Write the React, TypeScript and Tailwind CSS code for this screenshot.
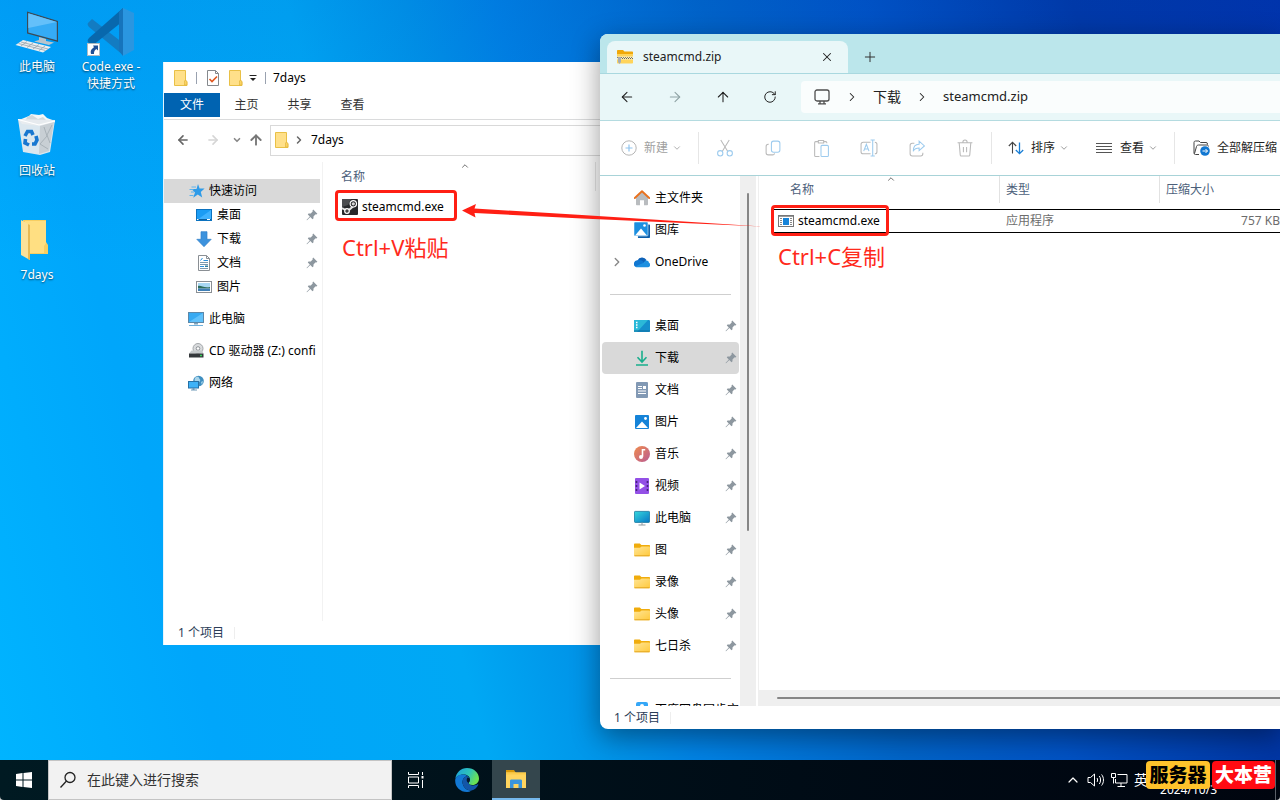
import React from 'react';
import {
  ArrowLeft, ArrowRight, ArrowUp, ChevronDown, ChevronRight, ChevronUp, Plus, RotateCw, X,
} from 'lucide-react';

type IconProps = { className?: string };

// ---------- shared icons ----------

const PinIcon = ({ className = '' }: IconProps) => (
  <svg viewBox="0 0 12 12" className={`h-3 w-3 shrink-0 ${className}`} fill="#8d979f">
    <path d="M7.2.6 11.4 4.8 10.4 5.5 9.7 5.2 7.6 7.3 7.4 9.6 6.5 10.2 4.3 8 1 11.3.5 10.9 3.8 7.4 1.8 5.4 2.5 4.6 4.8 4.4 6.8 2.3 6.5 1.5Z" />
  </svg>
);

// narrow manila folder used by the older shell
const ManilaFolder = ({ className = '' }: IconProps) => (
  <svg viewBox="0 0 14 16" className={`shrink-0 ${className}`}>
    <path d="M.5.5h11v10l1.5 1.2v3.8H.5Z" fill="#ffe08a" stroke="#e9c046" />
    <path d="M10.500 15V10.800l1.500-.5.800 1.200V15Z" fill="#fbd362" stroke="#dfb238" strokeWidth=".6" />
  </svg>
);

const YellowFolder = () => (
  <svg viewBox="0 0 16 16" className="h-4 w-4 shrink-0">
    <defs>
      <linearGradient id="fold" x1="0" y1="0" x2="1" y2="1">
        <stop stopColor="#ffe596" />
        <stop offset="1" stopColor="#ffc93c" />
      </linearGradient>
    </defs>
    <path d="M0 2.500C0 1.900.4 1.500 1 1.500h4.800l1.600 1.600H15c.6 0 1 .4 1 1V8H0Z" fill="#f0ac0c" />
    <path d="M0 5.800h6l1.600-1.400H15c.6 0 1 .4 1 1v7.800c0 .6-.4 1-1 1H1c-.6 0-1-.4-1-1Z" fill="url(#fold)" />
    <path d="M.5 13.800h15" stroke="#e0a21a" strokeWidth=".9" />
  </svg>
);

const MonitorIcon = () => (
  <svg viewBox="0 0 16 16" className="h-4 w-4 shrink-0">
    <defs>
      <linearGradient id="mon" x1="0" y1="0" x2="1" y2="1">
        <stop stopColor="#35d8dc" />
        <stop offset="1" stopColor="#0876c6" />
      </linearGradient>
    </defs>
    <rect x=".4" y="1.400" width="15.200" height="11" rx=".8" fill="url(#mon)" stroke="#14759d" strokeWidth=".8" />
    <path d="M7.500 12.500h1v2.200h-1ZM4.500 14.600h7v1h-7Z" fill="#909aa0" />
  </svg>
);

// ---------- desktop icons ----------

const ComputerIcon = () => (
  <svg viewBox="0 0 48 48" className="h-12 w-12">
    <path d="m14 3.500 31 9.500v21L14 25.500Z" fill="#3c4a56" />
    <path d="m15.300 5.300 28.500 8.600v18.400l-28.500-7.800Z" fill="#35abf5" />
    <path d="m15.300 5.300 28.500 8.600L15.300 20Z" fill="#64c0fa" />
    <path d="m26 29 7 2 0 2 8 1.500-5 2.500-15-3.500 5-1.500Z" fill="#b8c4cb" />
    <path d="m10 32 28 7-8 5.500L2.500 37Z" fill="#e9eef1" />
    <path d="m8 34 27 7M5.500 35.500l27 7M14 33.500l-6 4.500M20 35l-6 4.500M26 36.500 20 41M32 38l-6 4.500" stroke="#96a3ab" strokeWidth=".8" />
  </svg>
);

const RecycleBinIcon = () => (
  <svg viewBox="0 0 48 48" className="h-12 w-12">
    <path d="m6 8 5-2 5-2 2-2 8 1 4-1 4 4 8 3-3 6-30-3Z" fill="#f5f7f8" />
    <path d="m14 5 5-2 6 4 5-2 4 4-9 3-13-2Z" fill="#d3d9dd" />
    <path d="m5 7 37 1-5 32-10 3-17-3Z" fill="#e7ebee" opacity=".95" />
    <path d="m27 14 14-4-5 29-10 3Z" fill="#c8cfd4" />
    <path d="m31 15 3 9-7 8 8 5M39 13l-5 10 3 8" fill="none" stroke="#a9b2b8" />
    <path d="m5 7.500 21 5.500 16-4" fill="none" stroke="#fff" strokeWidth="1.200" />
    <g fill="none" stroke="#1877d0" strokeWidth="3.600">
      <path d="m12 24 2.500-4.500h4L20 23" />
      <path d="m23 24 1 4-2 4h-3" />
      <path d="m16 33-4-2 .5-4" />
    </g>
  </svg>
);

const BigFolderIcon = () => (
  <svg viewBox="0 0 48 48" className="h-12 w-12">
    <path d="M10 4h23v22l2 3v9H10Z" fill="#f7ce62" />
    <path d="M12 5h21v22l-2 3v7H12Z" fill="#ffdf82" />
    <path d="m8 4 9 5v35l-9-5Z" fill="#fbe199" />
    <path d="m15 8 2 1v35l-2-1Z" fill="#e8ba54" />
  </svg>
);

const CodeIcon = () => (
  <svg viewBox="0 0 48 48" className="h-12 w-12">
    <path d="m1 15 4-4 31 24v12L2 19c-1-1-2-3-1-4Z" fill="#137cc2" />
    <path d="m1 34 4 4 31-25V0L2 30c-1 1-2 3-1 4Z" fill="#0868ad" />
    <path d="m36 0 11 5v37l-11 6Z" fill="#2a96e0" />
    <path d="m36 0-4 4v39l4 5Z" fill="#1674bc" />
    <rect x=".5" y="35.500" width="12" height="12" fill="#fff" stroke="#aebbc4" />
    <path d="M6 37.500h5v5L9.300 41C7 43 7 44 7 46H4c-1-4 1-5 3-6.700Z" fill="#1f4f96" />
  </svg>
);

const desktopIcons = [
  { label: '此电脑', icon: <ComputerIcon />, place: 'left-0 top-2' },
  { label: '回收站', icon: <RecycleBinIcon />, place: 'left-0 top-28' },
  { label: '7days', icon: <BigFolderIcon />, place: 'left-0 top-54' },
  { label: 'Code.exe - 快捷方式', icon: <CodeIcon />, place: 'left-[74px] top-2' },
];

// ---------- older explorer window ----------

const QuickAccessIcon = () => (
  <svg viewBox="0 0 16 16" className="h-4 w-4 shrink-0">
    <path d="m9 1 1.600 4.500h5L11.800 9l1.400 5.500L8.800 11.600 4.200 14.800 6 9.500 2.500 6h5Z" fill="#2e9be8" />
    <path d="M2.500 4h4.500M.5 6.500h4M2 9h3M.5 12.500h4" stroke="#5eb3ec" />
  </svg>
);

const OldDesktopIcon = () => (
  <svg viewBox="0 0 16 16" className="h-4 w-4 shrink-0">
    <rect x=".5" y="2.500" width="15" height="11" fill="#1b9cf4" stroke="#0b72bf" />
    <path d="m1 13 14-10v10Z" fill="#3fb2ff" />
    <path d="M1 12.500h14" stroke="#0b5f9f" />
    <path d="M1 12.500h1.500M11 12.500h3" stroke="#fff" />
  </svg>
);

const OldDownloadIcon = () => (
  <svg viewBox="0 0 16 16" className="h-4 w-4 shrink-0">
    <path d="M5 .7h6v7.600h4.200L8 15.700.8 8.300H5Z" fill="#3c92dd" stroke="#2f7fca" strokeWidth=".7" />
  </svg>
);

const OldDocIcon = () => (
  <svg viewBox="0 0 16 16" className="h-4 w-4 shrink-0">
    <path d="M2.500.5h8l3 3v12h-11Z" fill="#fff" stroke="#8a8f94" />
    <path d="M10.500.5v3h3" fill="none" stroke="#8a8f94" />
    <path d="M4 7.500h8M4 9.500h8M4 13.500h8" stroke="#7c98ad" />
    <path d="M4.500 5.500 6.500 3M7.500 5.500H12M4 11.500h4" stroke="#2990dd" />
    <path d="M9 10.500h3v1.500H9Z" fill="#2f7c9d" />
  </svg>
);

const OldPictureIcon = () => (
  <svg viewBox="0 0 16 16" className="h-4 w-4 shrink-0">
    <rect x=".5" y="2.500" width="15" height="11" fill="#fff" stroke="#8a8f94" />
    <path d="M2 4h12v4H2Z" fill="#a8d7f3" />
    <path d="M2 7c3-1 5 2 12 1v1.500H2Z" fill="#2d6d5b" />
    <path d="M2 9.500h12V12H2Z" fill="#3f7fb6" />
  </svg>
);

const OldPcIcon = () => (
  <svg viewBox="0 0 16 16" className="h-4 w-4 shrink-0">
    <rect x=".5" y="1.500" width="15" height="10" fill="#37aaf2" stroke="#5d88a8" />
    <path d="m1 11 14-9v9Z" fill="#60c1fa" />
    <path d="M6 12h4v1.500H6Z" fill="#7fa3bb" />
    <path d="M1 14.500h14" stroke="#6fb0dc" />
  </svg>
);

const CdIcon = () => (
  <svg viewBox="0 0 16 16" className="h-4 w-4 shrink-0">
    <circle cx="10" cy="5.500" r="5" fill="#d9dbdd" stroke="#a3a7aa" />
    <circle cx="10" cy="5.500" r="1.800" fill="#fff" stroke="#8d9296" />
    <path d="m3.500 7.500-2.500 3h14.500l-1.500-3Z" fill="#c6cacc" />
    <path d="M1 10.500h14.500v4H1Z" fill="#34383b" />
    <path d="M12 12.500h2" stroke="#37d45a" strokeWidth="1.500" />
  </svg>
);

const NetworkIcon = () => (
  <svg viewBox="0 0 16 16" className="h-4 w-4 shrink-0">
    <circle cx="10.500" cy="6" r="5.300" fill="#3f8fc0" />
    <path d="M7 3c2-2 4-1 4 0s2 1 1 3-3 0-4 1-2-2-1-4ZM13 7l2-1-1 4Z" fill="#a8d4ea" />
    <rect x=".5" y="6.500" width="10" height="6.500" fill="#3eb2f7" stroke="#2671a6" />
    <path d="M4.500 13h2v1.500h-2ZM3 14.500h6v1H3Z" fill="#6f9ab8" />
  </svg>
);

const SteamIcon = () => (
  <svg viewBox="0 0 16 16" className="h-4 w-4 shrink-0">
    <rect width="16" height="16" rx="1" fill="#26282b" />
    <path d="M0 0h9L6 6 0 8Z" fill="#4a4c4f" />
    <path d="m0 9 4.500 2.500M7 11l4.500-4" fill="none" stroke="#e2e2e2" strokeWidth="2" />
    <circle cx="11.300" cy="4.800" r="3.200" fill="#26282b" stroke="#fff" strokeWidth="1.200" />
    <circle cx="11.300" cy="4.800" r="1.600" fill="#d5d5d5" />
    <circle cx="5" cy="12" r="2.300" fill="#444" stroke="#fff" strokeWidth="1.200" />
  </svg>
);

const oldNav = [
  { label: '桌面', icon: <OldDesktopIcon /> },
  { label: '下载', icon: <OldDownloadIcon /> },
  { label: '文档', icon: <OldDocIcon /> },
  { label: '图片', icon: <OldPictureIcon /> },
];

const oldRoots = [
  { label: '此电脑', icon: <OldPcIcon /> },
  { label: 'CD 驱动器 (Z:) confi', icon: <CdIcon /> },
  { label: '网络', icon: <NetworkIcon /> },
];

function DaysWindow() {
  return (
    <section aria-label="7days" className="absolute bottom-[115px] left-[163px] top-[62px] flex w-[560px] flex-col border-l border-[#e4f4fd] bg-white">
      <header className="flex h-[31px] shrink-0 items-center pl-2.5">
        <ManilaFolder className="h-4 w-3.5" />
        <span className="ml-2 h-3 w-px bg-gray-400" />
        <svg viewBox="0 0 12 16" className="ml-2.5 h-4 w-3">
          <path d="M.5.5h8l3 3v12H.5Z" fill="#fff" stroke="#85898d" />
          <path d="M8.500.5v3h3" fill="none" stroke="#85898d" />
          <path d="m2.500 9 2.500 2.500 5-5" fill="none" stroke="#e1571f" strokeWidth="1.600" />
        </svg>
        <ManilaFolder className="ml-2.5 h-4 w-3.5" />
        <svg viewBox="0 0 8 8" className="ml-1.5 h-2 w-2">
          <path d="M.5 1.500h7" stroke="#222" />
          <path d="M1 4h6L4 7Z" fill="#222" />
        </svg>
        <span className="ml-2 h-3 w-px bg-gray-400" />
        <h2 className="ml-[7px]">7days</h2>
      </header>

      <div className="flex h-[27px] shrink-0 items-start border-b border-[#dadbdc] text-[#333]">
        <button className="h-6 w-14 bg-[#0063b1] text-white">文件</button>
        <button className="h-6 w-[53px]">主页</button>
        <button className="h-6 w-[53px]">共享</button>
        <button className="h-6 w-[53px]">查看</button>
      </div>

      <div className="flex h-10 shrink-0 items-center pl-3">
        <button aria-label="返回"><ArrowLeft className="h-3.5 w-3.5 text-[#666]" strokeWidth={2.8} /></button>
        <button aria-label="前进" className="ml-4"><ArrowRight className="h-3.5 w-3.5 text-[#d5d5d5]" strokeWidth={2.8} /></button>
        <button aria-label="最近" className="ml-3"><ChevronDown className="h-2.5 w-2.5 text-[#888]" strokeWidth={4} /></button>
        <button aria-label="向上" className="ml-1.5"><ArrowUp className="h-4 w-4 text-[#777]" strokeWidth={2.8} /></button>
        <div className="ml-1.5 flex h-[31px] flex-1 items-center border border-[#d9d9d9] pl-1">
          <ManilaFolder className="h-4 w-3.5" />
          <ChevronRight className="ml-1 h-3 w-3 text-[#666]" strokeWidth={3} />
          <span className="ml-1.5">7days</span>
        </div>
      </div>

      <div className="flex min-h-0 flex-1">
        <nav className="mt-0.5 w-[159px] shrink-0 border-r border-[#f2f2f2] pt-[17px]">
          <a href="#quick" className="flex h-6 w-[156px] items-center gap-1 bg-[#d9d9d9] pl-[25px]">
            <QuickAccessIcon />快速访问
          </a>
          {oldNav.map((item) => (
            <a key={item.label} href="#nav" className="flex h-6 w-[156px] items-center pl-8">
              {item.icon}
              <span className="ml-[5px] flex-1">{item.label}</span>
              <PinIcon className="mr-0.5" />
            </a>
          ))}
          <div className="mt-2 flex flex-col gap-2">
            {oldRoots.map((item) => (
              <a key={item.label} href="#root" className="flex h-6 items-center gap-[5px] whitespace-nowrap pl-6">
                {item.icon}
                {item.label}
              </a>
            ))}
          </div>
        </nav>

        <div className="relative flex-1">
          <ChevronUp className="absolute left-[137px] top-px h-2.5 w-2.5 text-[#555]" strokeWidth={2} />
          <table className="w-full table-fixed border-collapse text-left">
            <thead>
              <tr>
                <th className="w-[273px] p-0 font-normal text-[#4c607a]">
                  <div className="mt-0.5 flex h-[29px] items-center border-r border-[#e5e5e5] pl-4.5">名称</div>
                </th>
                <th />
              </tr>
            </thead>
            <tbody>
              <tr>
                <td className="p-0">
                  <div className="mt-1 flex h-6 items-center gap-1 pl-[19px]"><SteamIcon />steamcmd.exe</div>
                </td>
                <td />
              </tr>
            </tbody>
          </table>
          <div className="absolute left-3 top-[30px] h-[31px] w-[122px] rounded border-3 border-[#ff1f14]" />
          <p className="absolute left-[19px] top-[71px] whitespace-nowrap text-[22px] leading-8 text-[#ff2a1c]">Ctrl+V粘贴</p>
        </div>
      </div>

      <footer className="flex h-6 shrink-0 items-center pl-3.5 text-[#2b3d57]">
        1 个项目
        <span className="ml-2.5 h-3 w-px bg-[#eee]" />
      </footer>
    </section>
  );
}

// ---------- newer explorer window ----------

const ZipIcon = () => (
  <svg viewBox="0 0 16 16" className="h-4 w-4 shrink-0">
    <path d="M0 2c0-.6.4-1 1-1h5l1.500 1.500H15c.6 0 1 .4 1 1V7H0Z" fill="#f0a80a" />
    <path d="M0 5h16v8.500c0 .6-.4 1-1 1H1c-.6 0-1-.4-1-1Z" fill="#ffd45a" />
    <path d="M0 7.500h16v3H0Z" fill="#f6ecc6" />
    <path d="M0 8.500h16" stroke="#8a8266" strokeDasharray="1 1" />
    <path d="M1 9.500h15" stroke="#6e6850" strokeDasharray="1 1" />
    <path d="M1 8h3v5l-1.500 2L1 13Z" fill="#a8adb1" />
  </svg>
);

const HomeIcon = () => (
  <svg viewBox="0 0 16 16" className="h-4 w-4 shrink-0">
    <path d="M2 7 8 2l6 5v7.500c0 .5-.3.800-.8.800H10v-5H6v5H2.800c-.5 0-.8-.3-.8-.8Z" fill="#b9bcbf" />
    <path d="M.8 8 8 1.300 15.200 8" fill="none" stroke="#e8711e" strokeWidth="1.900" strokeLinecap="round" strokeLinejoin="round" />
  </svg>
);

const GalleryIcon = () => (
  <svg viewBox="0 0 16 16" className="h-4 w-4 shrink-0">
    <path d="M3 2.500h12c.6 0 1 .4 1 1V15c0 .6-.4 1-1 1H4Z" fill="#0c5fab" />
    <rect width="14" height="14" rx="1" fill="#1c8fe0" stroke="#fff" strokeWidth=".5" />
    <path d="m1 13.500 6-7 6 7Z" fill="#fff" />
    <circle cx="10.500" cy="3.500" r="1.300" fill="#fff" />
  </svg>
);

const CloudIcon = () => (
  <svg viewBox="0 0 16 16" className="h-4 w-4 shrink-0">
    <path d="M3.500 6.500a5 5 0 0 1 9-.5L9 10 3 12Z" fill="#0e62b8" />
    <path d="M3.800 6.300A3.500 3.500 0 0 0 2 13l8-4.500C8 6.500 6 5.700 3.800 6.300Z" fill="#1177d1" />
    <path d="M10 8.500c1-3 4.500-2.500 5 .2A2.500 2.500 0 0 1 13.500 13.300H3c-1 0-1.500-.5-1.800-.8Z" fill="#1e90e0" />
  </svg>
);

const DesktopIcon = () => (
  <svg viewBox="0 0 16 16" className="h-4 w-4 shrink-0">
    <rect y="2" width="16" height="12" rx="1" fill="#1590cc" />
    <path d="M1 2h13L3 14H1c-.6 0-1-.4-1-1V3c0-.6.4-1 1-1Z" fill="#2bb9d8" />
    <path d="M2 4.500h1.500M2 7h1.500M2 9.500h1.500" stroke="#fff" strokeWidth="1.400" />
    <path d="M0 13h16" stroke="#116f9f" />
  </svg>
);

const DownloadIcon = () => (
  <svg viewBox="0 0 16 16" className="h-4 w-4 shrink-0" fill="none" stroke="#18ae8c" strokeWidth="1.600">
    <path d="M8 .8v11M3.500 7.300 8 12l4.500-4.700M2 15h12" />
  </svg>
);

const DocIcon = () => (
  <svg viewBox="0 0 16 16" className="h-4 w-4 shrink-0">
    <rect x="2" width="12" height="16" rx="1" fill="#8299b4" />
    <path d="M4 4.500h4M4 6.500h4M4 9h8M4 11.500h8" stroke="#fff" strokeWidth="1.200" />
    <rect x="9" y="4" width="3" height="3" fill="#fff" />
  </svg>
);

const PictureIcon = () => (
  <svg viewBox="0 0 16 16" className="h-4 w-4 shrink-0">
    <rect x="1" y="1" width="14" height="14" rx="1" fill="#1583d8" />
    <path d="m2 14 6-6.500 6 6.500Z" fill="#fff" />
    <circle cx="11.500" cy="4.500" r="1.400" fill="#fff" />
  </svg>
);

const MusicIcon = () => (
  <svg viewBox="0 0 16 16" className="h-4 w-4 shrink-0">
    <defs>
      <linearGradient id="mus" x1="0" y1="0" x2="1" y2="1">
        <stop stopColor="#f08c4c" />
        <stop offset="1" stopColor="#b95b94" />
      </linearGradient>
    </defs>
    <circle cx="8" cy="8" r="8" fill="url(#mus)" />
    <path d="M8.500 3v7.800M8.500 3.800h2.700" stroke="#fff" strokeWidth="1.600" />
    <circle cx="7" cy="11" r="2" fill="#fff" />
  </svg>
);

const VideoIcon = () => (
  <svg viewBox="0 0 16 16" className="h-4 w-4 shrink-0">
    <rect x="1" width="14" height="16" rx="1" fill="#9350e6" />
    <path d="M2.500 3v11M13.500 3v11" stroke="#45247c" strokeWidth="1.600" strokeDasharray="2 2" />
    <path d="m5.500 4.500 5.500 3.500-5.500 3.500Z" fill="#fff" />
  </svg>
);

const BaiduIcon = () => (
  <svg viewBox="0 0 16 16" className="h-4 w-4 shrink-0">
    <rect x="2" y="0" width="12" height="14" rx="2" fill="#35a7f7" />
    <circle cx="8" cy="4" r="2" fill="#fff" />
  </svg>
);

const ExeIcon = () => (
  <svg viewBox="0 0 16 16" className="h-4 w-4 shrink-0">
    <rect x=".5" y="2.500" width="15" height="11" fill="#fff" stroke="#777" />
    <path d="M1 3.500h14" stroke="#999" />
    <rect x="5" y="5" width="6" height="7" fill="#1683d8" />
    <path d="M3 5v7M13 5v7" stroke="#888" strokeWidth="2" strokeDasharray="1 1" />
  </svg>
);

const topPlaces = [
  { label: '主文件夹', icon: <HomeIcon />, expandable: false },
  { label: '图库', icon: <GalleryIcon />, expandable: false },
  { label: 'OneDrive', icon: <CloudIcon />, expandable: true },
];

const pinned = [
  { label: '桌面', icon: <DesktopIcon />, active: false },
  { label: '下载', icon: <DownloadIcon />, active: true },
  { label: '文档', icon: <DocIcon />, active: false },
  { label: '图片', icon: <PictureIcon />, active: false },
  { label: '音乐', icon: <MusicIcon />, active: false },
  { label: '视频', icon: <VideoIcon />, active: false },
  { label: '此电脑', icon: <MonitorIcon />, active: false },
  { label: '图', icon: <YellowFolder />, active: false },
  { label: '录像', icon: <YellowFolder />, active: false },
  { label: '头像', icon: <YellowFolder />, active: false },
  { label: '七日杀', icon: <YellowFolder />, active: false },
];

const tools = [
  {
    label: '剪切',
    icon: (
      <>
        <path d="M4.500 1 11 11.500M12.500 1 6 11.500" stroke="#b9b9b9" />
        <circle cx="4" cy="13.500" r="2.500" stroke="#9dcbee" />
        <circle cx="13" cy="13.500" r="2.500" stroke="#9dcbee" />
      </>
    ),
  },
  {
    label: '复制',
    icon: (
      <>
        <path d="M4.500 5H4a2 2 0 0 0-2 2v6a2 2 0 0 0 2 2h4a2 2 0 0 0 2-1.500" stroke="#b9b9b9" />
        <rect x="7" y="2" width="8" height="10.500" rx="2" stroke="#9dcbee" />
      </>
    ),
  },
  {
    label: '粘贴',
    icon: (
      <>
        <path d="M6 2.500H3.500a1 1 0 0 0-1 1v12a1 1 0 0 0 1 1H7M11 2.500h2a1 1 0 0 1 1 1V4M6 1.500h5v2.300H6Z" stroke="#b9b9b9" />
        <rect x="8.500" y="6" width="7" height="10.500" rx="1" stroke="#9dcbee" />
      </>
    ),
  },
  {
    label: '重命名',
    icon: (
      <>
        <path d="M10 3H3a2 2 0 0 0-2 2v7a2 2 0 0 0 2 2h7M14 3a2 2 0 0 1 2 2v7a2 2 0 0 1-2 2" stroke="#b9b9b9" />
        <path d="M10 1h4M12 1v15M10 16h4M3.500 11.500 6 5l2.500 6.500M4.500 9.500h3" stroke="#9dcbee" />
      </>
    ),
  },
  {
    label: '共享',
    icon: (
      <>
        <path d="M6 4H4a2 2 0 0 0-2 2v8a2 2 0 0 0 2 2h8a2 2 0 0 0 2-2v-1" stroke="#b9b9b9" />
        <path d="M10.500 5V2l5 4.500-5 4.500V8.500c-3 0-4.500 1-5.500 3 0-4 2-6.500 5.500-6.500Z" stroke="#9dcbee" />
      </>
    ),
  },
  {
    label: '删除',
    icon: (
      <path d="M1.500 3.500h14M3 3.500l1 11.500a1 1 0 0 0 1 1h7a1 1 0 0 0 1-1l1-11.500M6.500 3a2 2 0 0 1 4 0M7 7.500v5M10 7.500v5" stroke="#b9b9b9" />
    ),
  },
];

const Divider = () => (
  <div className="mx-2.5 flex h-8 w-[121px] items-center">
    <span className="h-px w-full bg-[#cfcfcf]" />
  </div>
);

function ZipWindow() {
  return (
    <section
      aria-label="steamcmd.zip"
      className="absolute bottom-[31px] left-[600px] right-0 top-[34px] flex flex-col overflow-hidden rounded-l-lg bg-white shadow-[0_8px_28px_rgba(0,0,0,0.4)]"
    >
      <div className="flex h-10 shrink-0 items-end border-b border-[#a9d8df] bg-[#bbe6eb] pl-[7px]">
        <div className="flex h-8 w-[241px] items-center rounded-t-lg bg-[#e9f7f8] pl-2.5 pr-3.5">
          <ZipIcon />
          <h2 className="ml-2.5 flex-1 text-[#222]">steamcmd.zip</h2>
          <button aria-label="关闭标签页"><X className="h-3.5 w-3.5 text-[#222]" strokeWidth={1.8} /></button>
        </div>
        <button aria-label="新建标签页" className="flex h-8 w-11 items-center justify-center">
          <Plus className="h-4 w-4 text-[#333]" strokeWidth={1.5} />
        </button>
      </div>

      <div className="flex h-[47px] shrink-0 items-center border-b border-[#b4dbe0] bg-[#e9f7f8] pl-[19px] text-[#222]">
        <button aria-label="返回"><ArrowLeft className="h-4 w-4" strokeWidth={1.6} /></button>
        <button aria-label="前进" className="ml-8"><ArrowRight className="h-4 w-4 text-[#8fa3a5]" strokeWidth={1.6} /></button>
        <button aria-label="向上" className="ml-8"><ArrowUp className="h-4 w-4" strokeWidth={1.6} /></button>
        <button aria-label="刷新" className="ml-8"><RotateCw className="h-3.5 w-3.5" strokeWidth={1.7} /></button>
        <div className="ml-6 flex h-8 flex-1 items-center rounded-l bg-[#fafdfd] pl-3 text-[13px]">
          <svg viewBox="0 0 18 16" className="h-4 w-[18px]" fill="none" stroke="#4d4d4d" strokeWidth="1.300">
            <rect x="2" y="1" width="14" height="11" rx="2" />
            <path d="M7 12v2.500M11 12v2.500M5 14.800h8" />
          </svg>
          <ChevronRight className="ml-3.5 h-3.5 w-3.5" strokeWidth={1.8} />
          <a href="#downloads" className="ml-3.5 text-sm">下载</a>
          <ChevronRight className="ml-3.5 h-3.5 w-3.5" strokeWidth={1.8} />
          <a href="#zip" className="ml-3.5">steamcmd.zip</a>
        </div>
      </div>

      <div className="flex h-[55px] shrink-0 items-center overflow-hidden whitespace-nowrap border-b border-[#a8d3d8] pl-[21px] text-[#1f1f1f]">
        <button className="flex items-center text-[#a0a0a0]">
          <svg viewBox="0 0 16 16" className="h-4 w-4" fill="none">
            <circle cx="8" cy="8" r="7.200" stroke="#b5b5b5" />
            <path d="M8 4.500v7M4.500 8h7" stroke="#8fc4ee" strokeWidth="1.200" />
          </svg>
          <span className="ml-[7px]">新建</span>
          <ChevronDown className="ml-1 h-2.5 w-2.5" />
        </button>
        <span className="ml-4 h-8 w-px shrink-0 bg-[#e6e6e6]" />
        <div className="ml-[17px] flex gap-[30px]">
          {tools.map((tool) => (
            <button key={tool.label} aria-label={tool.label}>
              <svg viewBox="0 0 17 17" className="h-[18px] w-[18px]" fill="none">{tool.icon}</svg>
            </button>
          ))}
        </div>
        <span className="ml-[17px] h-8 w-px shrink-0 bg-[#e6e6e6]" />
        <button className="ml-4 flex items-center">
          <svg viewBox="0 0 16 16" className="h-4 w-4" fill="none">
            <path d="M4.500 13.500V2.500M.8 6l3.700-3.700L8.200 6" stroke="#444" strokeWidth="1.100" />
            <path d="M11.500 2.500v11M7.800 10l3.700 3.700 3.700-3.700" stroke="#1a7fd6" strokeWidth="1.300" />
          </svg>
          <span className="ml-[7px]">排序</span>
          <ChevronDown className="ml-1 h-2.5 w-2.5 text-[#888]" />
        </button>
        <button className="ml-[27px] flex items-center">
          <svg viewBox="0 0 16 16" className="h-4 w-4" stroke="#555">
            <path d="M0 3.500h16M0 6.500h16M0 9.500h16M0 12.500h16" />
          </svg>
          <span className="ml-2">查看</span>
          <ChevronDown className="ml-1 h-2.5 w-2.5 text-[#888]" />
        </button>
        <span className="ml-4 h-8 w-px shrink-0 bg-[#e6e6e6]" />
        <button className="ml-[18px] flex shrink-0 items-center">
          <svg viewBox="0 0 17 16" className="h-4 w-[17px]" fill="none">
            <path d="M6 14.500H2.500A1.500 1.500 0 0 1 1 13V2.500C1 1.500 1.700 1 2.500 1H6l1.500 1.500H13A1.500 1.500 0 0 1 14.500 4v.5M1.500 13.500 3.500 6.500C3.800 5.500 4.500 5 5.500 5H14c1 0 1.500.8 1.500 1.500" stroke="#444" />
            <circle cx="12" cy="11" r="4.800" fill="#1177d1" />
            <path d="M9.500 11h5M12.500 9l2 2-2 2" stroke="#fff" />
          </svg>
          <span className="ml-[7px]">全部解压缩</span>
        </button>
      </div>

      <div className="flex min-h-0 flex-1">
        <nav className="w-[140px] shrink-0 overflow-hidden pt-1.5">
          {topPlaces.map((place) => (
            <a key={place.label} href="#place" className="flex h-8 items-center">
              <span className="flex w-[34px] justify-center">
                {place.expandable && <ChevronRight className="h-3.5 w-3.5 text-[#888]" strokeWidth={2.4} />}
              </span>
              {place.icon}
              <span className="ml-[5px]">{place.label}</span>
            </a>
          ))}
          <Divider />
          {pinned.map((place) => (
            <a
              key={place.label}
              href="#pinned"
              className={`ml-0.5 flex h-8 w-[137px] items-center rounded-sm pl-8 ${place.active ? 'bg-[#d9d9d9]' : ''}`}
            >
              {place.icon}
              <span className="ml-[5px] flex-1">{place.label}</span>
              <PinIcon className="mr-0.5" />
            </a>
          ))}
          <Divider />
          <a href="#sync" className="flex h-8 w-[139px] items-center overflow-hidden whitespace-nowrap pl-[34px]">
            <BaiduIcon />
            <span className="ml-[5px]">百度网盘同步空</span>
          </a>
        </nav>
        <div className="w-4 shrink-0 bg-[#efefef] pt-[17px]">
          <div className="ml-[7px] h-[338px] w-0.5 rounded-full bg-[#868686]" />
        </div>

        <div className="ml-0.5 flex min-w-0 flex-1 flex-col border-l border-[#efefef]">
          <div className="relative min-h-0 flex-1 pl-[15px]">
            <ChevronUp className="absolute left-[127px] -top-0.5 h-2.5 w-2.5 text-[#555]" strokeWidth={2} />
            <table className="w-full table-fixed border-separate border-spacing-0 text-left">
              <thead className="text-[#4c607a]">
                <tr>
                  <th className="h-[33px] w-[225px] p-0 align-top font-normal"><div className="flex h-[27px] items-center pl-4">名称</div></th>
                  <th className="h-[33px] w-40 p-0 align-top font-normal"><div className="flex h-[27px] items-center border-l border-[#e2e2e2] pl-1.5">类型</div></th>
                  <th className="h-[33px] p-0 align-top font-normal"><div className="flex h-[27px] items-center border-l border-[#e2e2e2] pl-1.5">压缩大小</div></th>
                </tr>
              </thead>
              <tbody>
                <tr>
                  <td className="h-6 border-y border-black p-0"><div className="flex items-center gap-1 pl-1"><ExeIcon />steamcmd.exe</div></td>
                  <td className="h-6 border-y border-black py-0 pl-[7px] text-[#6d6d6d]">应用程序</td>
                  <td className="h-6 border-y border-black p-0 text-right text-[#6d6d6d]">757 KB</td>
                </tr>
              </tbody>
            </table>
            <div className="absolute left-3 top-[29px] h-[31px] w-[118px] rounded border-3 border-[#ff1f14]" />
            <p className="absolute left-[19px] top-16 whitespace-nowrap text-[22px] leading-8 text-[#ff2a1c]">Ctrl+C复制</p>
          </div>
          <div className="h-4 shrink-0 bg-[#efefef] pl-[18px] pt-[7px]">
            <div className="h-0.5 rounded-l-full bg-[#868686]" />
          </div>
        </div>
      </div>

      <footer className="flex h-[23px] shrink-0 items-center pl-3.5 text-[#2b3d57]">
        1 个项目
        <span className="ml-2.5 h-3 w-px bg-[#eee]" />
      </footer>
    </section>
  );
}

// ---------- taskbar ----------

const EdgeIcon = () => (
  <svg viewBox="0 0 24 24" className="h-6 w-6">
    <defs>
      <linearGradient id="edgeTop" x1="0" y1="0" x2="1" y2=".4">
        <stop stopColor="#199fe0" />
        <stop offset=".6" stopColor="#2fc3b8" />
        <stop offset="1" stopColor="#6be254" />
      </linearGradient>
    </defs>
    <path d="M.3 11C1 4.500 6 0 12 0c7 0 12 5 12 10.500 0 4-3 6.500-6.500 6.500-3 0-4-1-4-2 0-.8 1.500-1.500 1.500-3.500C15 8.500 12 6.500 8.500 6.500 4 6.500.8 9 .3 11Z" fill="url(#edgeTop)" />
    <path d="M.2 12C.5 8.500 4 6.500 8 6.500c2 0 3.500.7 4.500 1.500C9.500 8.500 7.500 11 7.500 14c0 4.500 4 9 9 8.500-1.500 1-3 1.500-4.500 1.500C5 24-.2 18.500.2 12Z" fill="#1278d4" />
    <path d="M7.500 14c0-3 2-5.500 5-6 1.600 1 2.500 2.200 2.500 3.500 0 2-1.500 2.700-1.500 3.500 0 1.500 2 2.500 4.500 2.500 2 0 3.500-.5 4.500-1.200.5-.3 1 .1.700.7-1.200 2.500-3.500 4.700-6.700 5.500-5 .5-9-4-9-8.500Z" fill="#1356a8" />
    <path d="M12.500 9.500c1.600.3 2.500 1 2.500 2 0 2-1.500 2.700-1.500 3.500-1.800-1-2.500-3.500-1-5.500Z" fill="#04192a" />
  </svg>
);

const FileExplorerIcon = () => (
  <svg viewBox="0 0 22 20" className="h-5 w-[22px]">
    <path d="M1 1h8l2 3H1Z" fill="#d9990a" />
    <path d="M1 3.500h20V19H1Z" fill="#ffd45e" />
    <path d="M1 3.500h20v2H1Z" fill="#fbcb4a" />
    <path d="M5 19v-7c0-1 .5-1.500 1.500-1.500h9c1 0 1.500.5 1.500 1.500v7h-3.500v-4h-5v4Z" fill="#3a95dc" />
  </svg>
);

function Taskbar() {
  return (
    <footer className="relative flex h-10 shrink-0 overflow-hidden rounded-b bg-linear-to-r from-[#001a22] to-[#00050f] text-white">
      <button aria-label="开始" className="flex w-12 items-center justify-center">
        <svg viewBox="0 0 16 16" className="h-4 w-4" fill="#fff">
          <path d="M0 2 6.500 1v6.500H0ZM7.500.9 16 0v7.500H7.500ZM0 8.500h6.500V15L0 14ZM7.500 8.500H16V16l-8.500-1Z" />
        </svg>
      </button>
      <label className="flex w-[344px] items-center border border-[#c4c4c4] bg-[#f2f2f2] pl-2.5">
        <svg viewBox="0 0 18 18" className="h-[18px] w-[18px]" fill="none" stroke="#222" strokeWidth="1.300">
          <circle cx="11" cy="6.500" r="5" />
          <path d="M7.500 10 1.500 16.500" />
        </svg>
        <input
          type="text"
          aria-label="搜索"
          placeholder="在此键入进行搜索"
          className="ml-2.5 min-w-0 flex-1 bg-transparent text-sm outline-none placeholder:text-[#333]"
        />
      </label>
      <button aria-label="任务视图" className="flex w-12 items-center justify-center">
        <svg viewBox="0 0 16 16" className="h-4 w-4" fill="none" stroke="#fff">
          <path d="M.5 0v2.500h10V0M.5 16v-2.500h10V16M.5 5h10v6H.5ZM14.500 0v3M14.500 8v8" />
          <path d="M13.500 4h2v2.500h-2Z" fill="#fff" stroke="none" />
        </svg>
      </button>
      <button aria-label="Edge" className="ml-0.5 flex w-[50px] items-center justify-center"><EdgeIcon /></button>
      <button aria-label="文件资源管理器" className="flex w-12 items-center justify-center border-b-2 border-[#76b9ed] bg-[#34464d]"><FileExplorerIcon /></button>

      <div className="ml-auto mr-1 flex items-center border-r border-[#5b6068] pr-[54px]">
        <ChevronUp className="h-4 w-4" strokeWidth={1.8} />
        <svg viewBox="0 0 18 16" className="ml-1.5 h-4 w-[18px]" fill="none" stroke="#fff">
          <path d="M1 5.500h2.500l4-3.500v12l-4-3.500H1ZM10 6c.8 1 .8 3 0 4M12.300 4c1.700 2 1.700 6 0 8M14.600 2.500c2.500 3 2.500 8 0 11" />
        </svg>
        <svg viewBox="0 0 17 16" className="ml-1.5 h-4 w-[17px]" fill="none" stroke="#fff">
          <path d="M6.500 2.500h9.500v8.500H4.500V7M10 11v3.500M6.500 14.500h7.500M.5 1.500h4v4h-4ZM2.500 5.500v6" />
        </svg>
        <span className="ml-1.5 text-sm">英</span>
        <time className="ml-3 mt-5 pr-1 text-xs leading-4">2024/10/3</time>
      </div>

      {/* channel badges sit on top of the clock */}
      <div className="absolute right-[5px] top-px flex gap-0.5 text-[19px] font-black leading-7">
        <span className="w-16 rounded bg-[#ffc32b] text-center text-black">服务器</span>
        <span className="w-[63px] rounded bg-[#ff0b12] text-center">大本营</span>
      </div>
    </footer>
  );
}

export default function App() {
  return (
    <div className="flex h-screen flex-col overflow-hidden bg-[#d0d0d0] font-['Noto_Sans','Noto_Sans_CJK_SC',sans-serif] text-xs text-black">
      <main className="relative min-h-0 flex-1 overflow-hidden bg-[linear-gradient(75deg,#00b4ff_0%,#00a6fb_15%,#00a8f4_33%,#0094e8_41%,#0082e4_47%,#0064c8_61%,#0052c4_72%,#0036a4_86%,#0030a8_100%)]">
        <div className="absolute inset-0 bg-[linear-gradient(180deg,rgba(0,80,200,0.12)_0%,transparent_35%)]" />
        {desktopIcons.map((item) => (
          <a
            key={item.label}
            href="#desktop"
            className={`absolute flex w-[74px] flex-col items-center gap-0.5 px-1 text-center leading-[17px] text-white [text-shadow:0_1px_2px_rgba(0,0,0,0.6)] ${item.place}`}
          >
            {item.icon}
            {item.label}
          </a>
        ))}
        <DaysWindow />
        <ZipWindow />
        <svg viewBox="0 0 300 26" className="pointer-events-none absolute left-[462px] top-[202px] h-[26px] w-[300px]">
          <path d="m0 8.500 14-6.500-1.500 4.500L120 13l180 11.500L120 16.500 12.500 11l1 4.500Z" fill="#ff1f14" />
        </svg>
      </main>
      <Taskbar />
    </div>
  );
}
